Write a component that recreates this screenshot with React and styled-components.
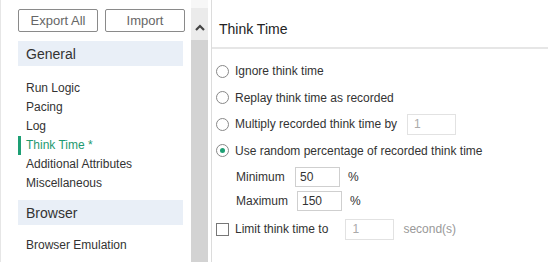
import React from 'react';
import styled, { createGlobalStyle } from 'styled-components'

const GlobalStyle = createGlobalStyle`
    html, body {
        margin: 0;
        padding: 0;
        background: #fff;
        overflow: hidden;
    }
    body {
        font-family: "Liberation Sans", Arial, sans-serif;
        color: #333;
    }
`

const Page = styled.div`
    display: flex;
    width: 548px;
    height: 262px;
    overflow: hidden;
`
const SidePane = styled.div`
    width: 167px;
    padding: 9px 6px 0 17px;
    border-left: 1px solid #e6e6e6;
    display: flex;
    flex-direction: column;
`
const ButtonRow = styled.div`
    display: flex;
    gap: 7px;
`
const ToolButton = styled.button`
    width: 80px;
    height: 23px;
    padding: 0;
    background: #fff;
    border: 1px solid #8a8a8a;
    border-radius: 2px;
    font-family: "Liberation Sans", Arial, sans-serif;
    font-size: 13px;
    color: #666;
`
const Section = styled.div`
    margin-top: ${p => p.first ? '9px' : '7px'};
    width: 165px;
    height: 25px;
    background: #e9eff7;
    display: flex;
    align-items: center;
    padding-left: 8px;
    box-sizing: border-box;
    font-size: 14px;
    color: #333;
`
const NavList = styled.div`
    display: flex;
    flex-direction: column;
    margin-top: ${p => p.gap || 13}px;
`
const NavItem = styled.div`
    height: 19px;
    line-height: 19px;
    font-size: 12px;
    padding-left: 5px;
    border-left: 3px solid ${p => p.active ? '#1d9f74' : 'transparent'};
    color: ${p => p.active ? '#1d9a70' : '#333'};
    white-space: nowrap;
`
const Scroll = styled.div`
    width: 17px;
    display: flex;
    flex-direction: column;
    background: #f7f7f7;
    padding-top: 8px;
`
const ScrollButton = styled.div`
    height: 32px;
    background: #ebebeb;
    display: flex;
    justify-content: center;
    padding-top: 16px;
    box-sizing: border-box;
`
const ScrollThumb = styled.div`
    flex: 1;
    background: #d3d3d3;
`
const Divider = styled.div`
    width: 1px;
    margin-left: 3px;
    background: #dcdcdc;
`
const Main = styled.div`
    flex: 1;
    display: flex;
    flex-direction: column;
`
const Header = styled.div`
    height: 49px;
    border-bottom: 2px solid #e6e6e6;
    padding: 21px 0 0 7px;
    box-sizing: border-box;
    font-size: 14px;
    line-height: 16px;
    color: #222;
`
const Options = styled.div`
    padding: 9px 0 0 4px;
    display: flex;
    flex-direction: column;
`
const OptionRow = styled.div`
    display: flex;
    align-items: center;
    height: ${p => p.h || 26.5}px;
    font-size: 12px;
    color: #333;
`
const Radio = styled.span`
    width: 11px;
    height: 11px;
    border: 1px solid #888;
    border-radius: 50%;
    margin-right: 6px;
    display: flex;
    align-items: center;
    justify-content: center;
    flex-shrink: 0;
    &::after {
        content: "";
        width: 5px;
        height: 5px;
        border-radius: 50%;
        background: ${p => p.checked ? '#1d9f74' : 'transparent'};
    }
`
const Check = styled.span`
    width: 11px;
    height: 11px;
    border: 1px solid #777;
    margin-right: 6px;
    flex-shrink: 0;
`
const Field = styled.div`
    width: ${p => p.w}px;
    height: ${p => p.h || 20}px;
    border: 1px solid ${p => p.disabled ? '#e2e2e2' : '#cfcfcf'};
    margin-left: ${p => p.ml || 0}px;
    box-sizing: border-box;
    display: flex;
    align-items: center;
    padding-left: ${p => p.disabled ? 6 : 4}px;
    font-size: 12px;
    color: ${p => p.disabled ? '#aaa' : '#333'};
`
const SubLabel = styled.span`
    width: ${p => p.w}px;
    margin-left: 20px;
`
const Unit = styled.span`
    margin-left: ${p => p.ml || 8}px;
    color: ${p => p.muted ? '#999' : '#333'};
`

const NavGroup = ({ items, active, gap }) => (
    <NavList gap={gap}>
        {items.map(t => <NavItem key={t} active={t === active}>{t}</NavItem>)}
    </NavList>
)

const App = () => {
    return (
        <Page>
            <GlobalStyle />
            <SidePane>
                <ButtonRow>
                    <ToolButton>Export All</ToolButton>
                    <ToolButton>Import</ToolButton>
                </ButtonRow>
                <Section first>General</Section>
                <NavGroup
                    active="Think Time *"
                    items={['Run Logic', 'Pacing', 'Log', 'Think Time *', 'Additional Attributes', 'Miscellaneous']}
                />
                <Section>Browser</Section>
                <NavGroup gap={11} items={['Browser Emulation']} />
            </SidePane>
            <Scroll>
                <ScrollButton>
                    <svg width="10" height="7" viewBox="0 0 10 7">
                        <path d="M1 6 L5 2 L9 6" fill="none" stroke="#444" strokeWidth="2.2" />
                    </svg>
                </ScrollButton>
                <ScrollThumb />
            </Scroll>
            <Divider />
            <Main>
                <Header>Think Time</Header>
                <Options>
                    <OptionRow><Radio />Ignore think time</OptionRow>
                    <OptionRow><Radio />Replay think time as recorded</OptionRow>
                    <OptionRow>
                        <Radio />Multiply recorded think time by
                        <Field w={49} h={21} ml={10} disabled>1</Field>
                    </OptionRow>
                    <OptionRow><Radio checked />Use random percentage of recorded think time</OptionRow>
                    <OptionRow h={25}>
                        <SubLabel w={59}>Minimum</SubLabel>
                        <Field w={45}>50</Field>
                        <Unit>%</Unit>
                    </OptionRow>
                    <OptionRow h={24}>
                        <SubLabel w={61}>Maximum</SubLabel>
                        <Field w={45}>150</Field>
                        <Unit>%</Unit>
                    </OptionRow>
                    <OptionRow h={32}>
                        <Check />Limit think time to
                        <Field w={49} h={21} ml={17} disabled>1</Field>
                        <Unit ml={9} muted>second(s)</Unit>
                    </OptionRow>
                </Options>
            </Main>
        </Page>
    );
};

export default App;
